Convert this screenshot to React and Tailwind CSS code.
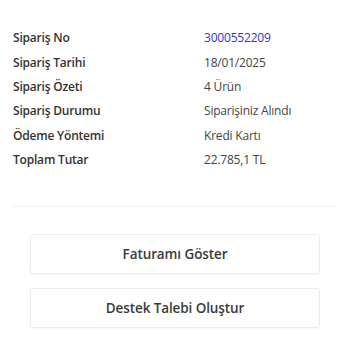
export default function App() {
  const rows = [
    ["Sipariş No", "3000552209", true],
    ["Sipariş Tarihi", "18/01/2025"],
    ["Sipariş Özeti", "4 Ürün"],
    ["Sipariş Durumu", "Siparişiniz Alındı"],
    ["Ödeme Yöntemi", "Kredi Kartı"],
    ["Toplam Tutar", "22.785,1 TL"],
  ];

  return (
    <div className="w-[350px] h-[350px] bg-white" style={{ fontFamily: '"Open Sans", sans-serif' }}>
      <div className="px-[13px] pt-[26px]">
        {rows.map(([label, value, link]) => (
          <div key={label} className="flex h-[24.4px] items-center text-[12px] tracking-[-0.2px]">
            <span className="w-[191px] font-semibold text-[#333]">{label}</span>
            <span className={link ? "text-[#3535c8]" : "text-[#444]"}>{value}</span>
          </div>
        ))}
        <div className="mt-[34px] border-t border-[#f0f0f0]" />
      </div>

      <div className="flex flex-col gap-[14px] px-[30px] pt-[27px]">
        <button className="h-[40px] rounded-[3px] border border-[#ececec] bg-white text-[13.5px] font-semibold tracking-[-0.1px] text-[#3a3a3a] shadow-[0_1px_2px_rgba(0,0,0,0.04)]">
          Faturamı Göster
        </button>
        <button className="h-[40px] rounded-[3px] border border-[#ececec] bg-white text-[13.5px] font-semibold tracking-[-0.1px] text-[#3a3a3a] shadow-[0_1px_2px_rgba(0,0,0,0.04)]">
          Destek Talebi Oluştur
        </button>
      </div>
    </div>
  );
}
